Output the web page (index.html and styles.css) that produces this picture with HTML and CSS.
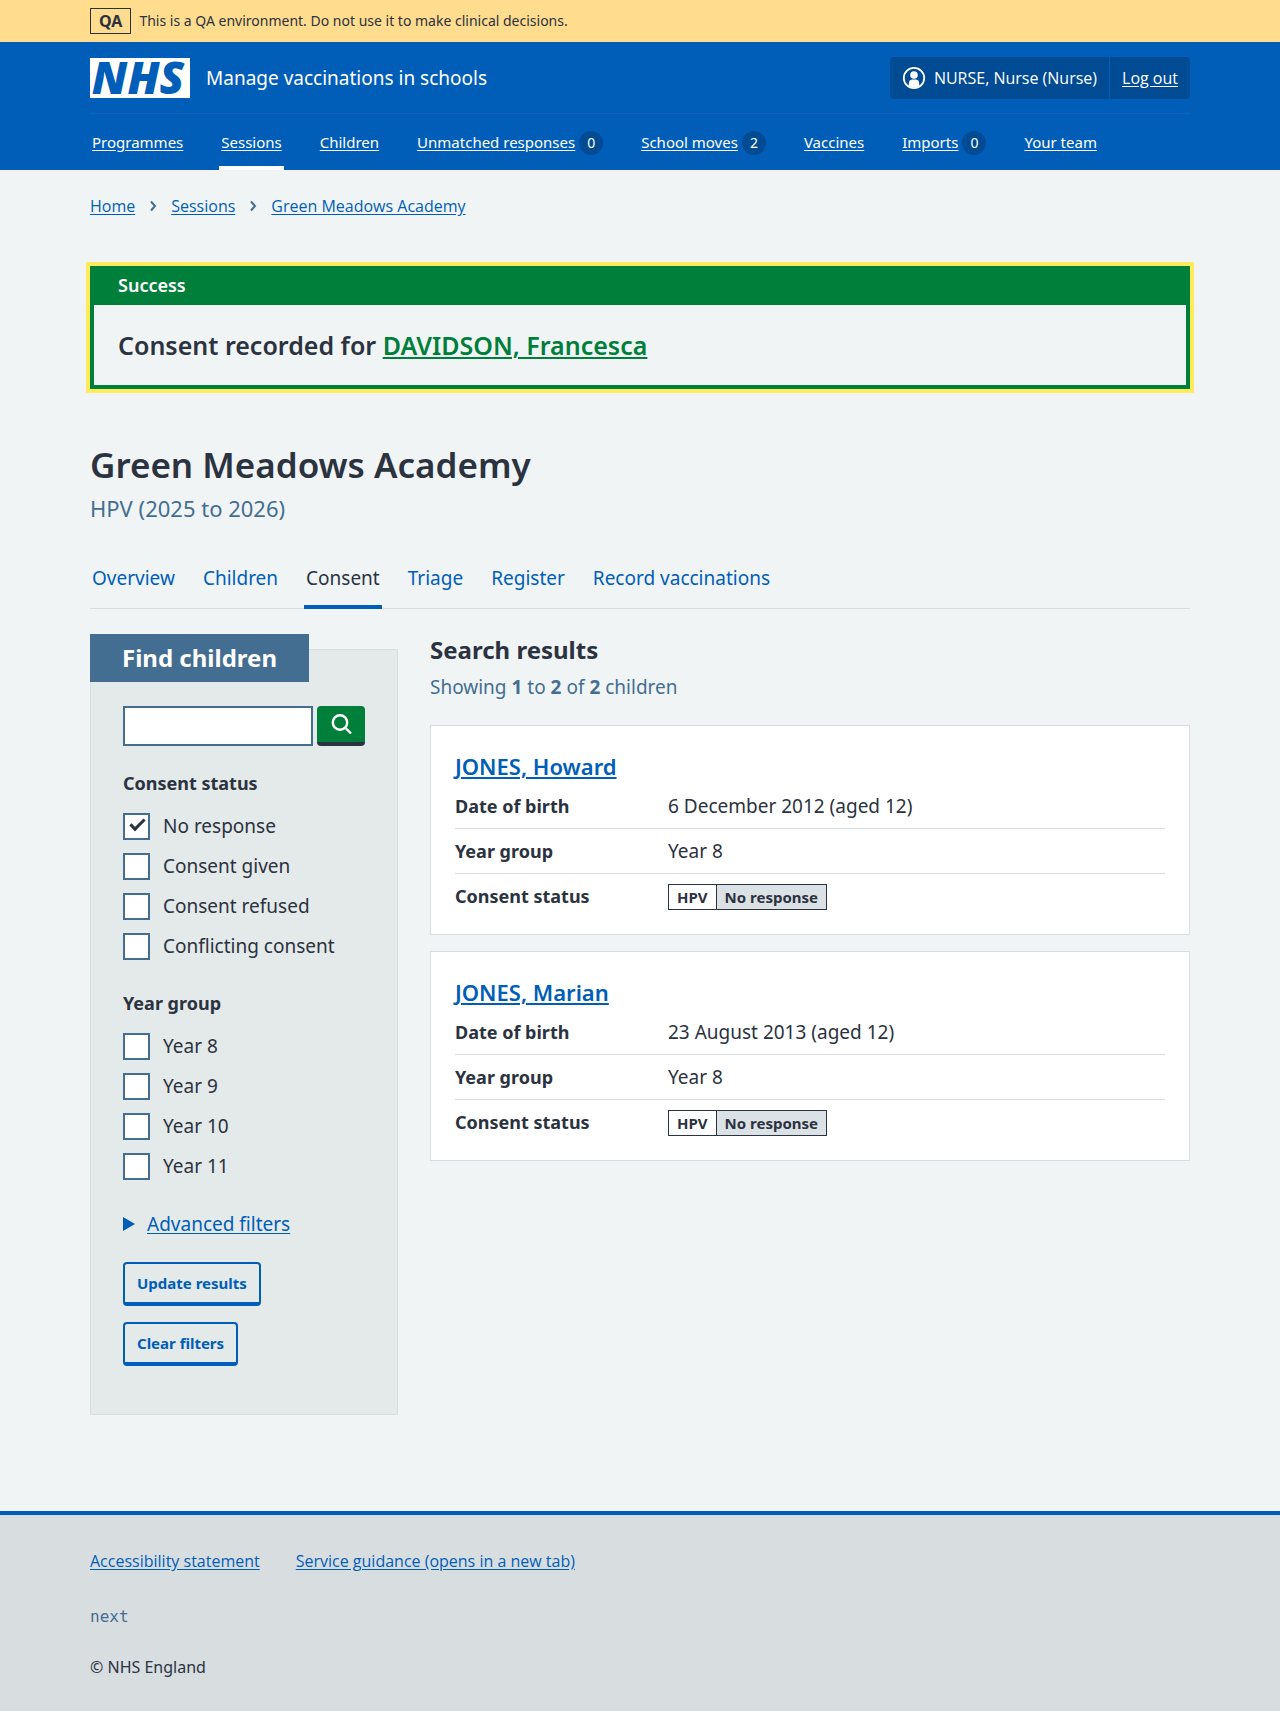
FILE: index.html
```html
<!DOCTYPE html>
<html lang="en">
<head>
<meta charset="utf-8">
<meta name="viewport" content="width=device-width, initial-scale=1">
<title>Green Meadows Academy – Manage vaccinations in schools</title>
<link rel="stylesheet" href="styles.css">
</head>
<body>
<div class="environment">
  <div class="container environment-inner">
    <strong class="environment-tag">QA</strong>
    <span>This is a QA environment. Do not use it to make clinical decisions.</span>
  </div>
</div>

<header class="header">
  <div class="container">
    <div class="header-top">
      <a class="service" href="#">
        <svg class="logo" viewBox="0 0 100 40" role="img" aria-label="NHS">
          <rect width="100" height="40" fill="#fff"/>
          <text class="logo-text" x="48" y="36" text-anchor="middle">NHS</text>
        </svg>
        <span>Manage vaccinations in schools</span>
      </a>
      <div class="account">
        <span class="account-user">
          <svg class="account-icon" viewBox="0 0 24 24" aria-hidden="true">
            <circle cx="12" cy="12" r="10.2" fill="none" stroke="#fff" stroke-width="1.8"/>
            <circle cx="12" cy="9" r="3.8" fill="#fff"/>
            <path fill="#fff" d="M6.8 20v-2.600a4 4 0 0 1 4-4h2.400a4 4 0 0 1 4 4V20A9.800 9.800 0 0 1 6.800 20z"/>
          </svg>
          NURSE, Nurse (Nurse)
        </span>
        <a class="account-link" href="#">Log out</a>
      </div>
    </div>
    <nav class="main-nav" aria-label="Menu">
      <a href="#">Programmes</a>
      <a class="current" href="#" aria-current="page">Sessions</a>
      <a href="#">Children</a>
      <a href="#">Unmatched responses<span class="count">0</span></a>
      <a href="#">School moves<span class="count">2</span></a>
      <a href="#">Vaccines</a>
      <a href="#">Imports<span class="count">0</span></a>
      <a href="#">Your team</a>
    </nav>
  </div>
</header>

<div class="container">
  <nav class="breadcrumb" aria-label="Breadcrumb">
    <a href="#">Home</a>
    <svg class="chevron" viewBox="0 0 8 12" aria-hidden="true"><path d="M2 1.500L6 6l-4 4.500"/></svg>
    <a href="#">Sessions</a>
    <svg class="chevron" viewBox="0 0 8 12" aria-hidden="true"><path d="M2 1.500L6 6l-4 4.500"/></svg>
    <a href="#">Green Meadows Academy</a>
  </nav>

  <main>
    <section class="notification" role="alert" aria-labelledby="notification-title">
      <h2 class="notification-title" id="notification-title">Success</h2>
      <p class="notification-text">Consent recorded for <a href="#">DAVIDSON, Francesca</a></p>
    </section>

    <h1 class="title">Green Meadows Academy</h1>
    <p class="caption">HPV (2025 to 2026)</p>

    <nav class="tabs" aria-label="Session">
      <a href="#">Overview</a>
      <a href="#">Children</a>
      <a class="current" href="#" aria-current="page">Consent</a>
      <a href="#">Triage</a>
      <a href="#">Register</a>
      <a href="#">Record vaccinations</a>
    </nav>

    <div class="columns">
      <form class="filters">
        <h2 class="filters-title">Find children</h2>
        <div class="filters-body">
          <div class="search">
            <input class="search-input" type="search" aria-label="Search">
            <button class="search-button" type="submit" aria-label="Search">
              <svg viewBox="0 0 24 24" aria-hidden="true"><circle cx="11" cy="10.500" r="7.200"/><path d="M16 15.500l6 6"/></svg>
            </button>
          </div>

          <fieldset class="group">
            <legend>Consent status</legend>
            <label class="option"><input type="checkbox" checked>No response</label>
            <label class="option"><input type="checkbox">Consent given</label>
            <label class="option"><input type="checkbox">Consent refused</label>
            <label class="option"><input type="checkbox">Conflicting consent</label>
          </fieldset>

          <fieldset class="group">
            <legend>Year group</legend>
            <label class="option"><input type="checkbox">Year 8</label>
            <label class="option"><input type="checkbox">Year 9</label>
            <label class="option"><input type="checkbox">Year 10</label>
            <label class="option"><input type="checkbox">Year 11</label>
          </fieldset>

          <details class="advanced">
            <summary><svg class="marker" viewBox="0 0 12 14" aria-hidden="true"><path d="M0 0l12 7-12 7z"/></svg><span>Advanced filters</span></summary>
          </details>

          <div class="actions">
            <button class="button" type="submit">Update results</button>
            <button class="button" type="reset">Clear filters</button>
          </div>
        </div>
      </form>

      <section class="results">
        <h2 class="results-title">Search results</h2>
        <p class="results-count">Showing <b>1</b> to <b>2</b> of <b>2</b> children</p>

        <article class="card">
          <h3 class="card-title"><a href="#">JONES, Howard</a></h3>
          <dl class="summary">
            <div><dt>Date of birth</dt><dd>6 December 2012 (aged 12)</dd></div>
            <div><dt>Year group</dt><dd>Year 8</dd></div>
            <div><dt>Consent status</dt><dd><span class="tag"><span>HPV</span><span class="tag-status">No response</span></span></dd></div>
          </dl>
        </article>

        <article class="card">
          <h3 class="card-title"><a href="#">JONES, Marian</a></h3>
          <dl class="summary">
            <div><dt>Date of birth</dt><dd>23 August 2013 (aged 12)</dd></div>
            <div><dt>Year group</dt><dd>Year 8</dd></div>
            <div><dt>Consent status</dt><dd><span class="tag"><span>HPV</span><span class="tag-status">No response</span></span></dd></div>
          </dl>
        </article>
      </section>
    </div>
  </main>
</div>

<footer class="footer">
  <div class="container">
    <nav class="footer-links" aria-label="Footer">
      <a href="#">Accessibility statement</a>
      <a href="#">Service guidance (opens in a new tab)</a>
    </nav>
    <p class="version">next</p>
    <p class="copyright">© NHS England</p>
  </div>
</footer>
</body>
</html>
```
FILE: styles.css
```css
:root {
  --blue: #005eb8;
  --dark-blue: #004b93;
  --text: #2b3240;
  --slate: #446e91;
  --green: #007f3b;
  --border: #d8dde0;
  --body: "Noto Sans", "Open Sans", sans-serif;
  --compact: "Open Sans", "Noto Sans", sans-serif;
}

* { box-sizing: border-box; }

body {
  margin: 0;
  min-height: 100vh;
  display: flex;
  flex-direction: column;
  background: #f0f4f5;
  color: var(--text);
  font: 19px/28px var(--body);
}

h1, h2, h3, p, dl, dd, fieldset { margin: 0; }
a { color: var(--blue); text-underline-offset: 2px; }

.container {
  width: 100%;
  max-width: 1164px;
  margin: 0 auto;
  padding: 0 32px;
}

/* Environment banner */
.environment { background: #ffdc8e; font-size: 14px; line-height: 24px; }
.environment-inner { display: flex; align-items: center; gap: 8px; min-height: 42px; }
.environment-tag { padding: 0 8px; border: 1px solid; font-size: 16px; }

/* Header */
.header { background: var(--blue); color: #fff; }
.header a { color: #fff; }
.header-top {
  display: flex;
  align-items: center;
  justify-content: space-between;
  height: 72px;
  border-bottom: 1px solid #1560b8;
}
.service { display: flex; align-items: center; gap: 16px; text-decoration: none; }
.logo { width: 100px; height: 40px; overflow: visible; }
.logo-text { fill: var(--blue); font: italic 800 45px var(--compact); }
.account { display: flex; border-radius: 4px; background: var(--dark-blue); font-family: var(--compact); font-size: 16px; }
.account-user, .account-link { display: flex; align-items: center; gap: 8px; height: 42px; padding: 0 12px; }
.account-icon { width: 24px; height: 24px; }
.account-link { border-left: 1px solid var(--blue); }
.main-nav { display: flex; gap: 34px; font-size: 15px; }
.main-nav a {
  height: 56px;
  padding: 16px 2px 0;
  border-bottom: 4px solid transparent;
  line-height: 24px;
}
.main-nav .current { border-color: #fff; }
.count {
  display: inline-block;
  min-width: 24px;
  margin-left: 4px;
  border-radius: 12px;
  background: var(--dark-blue);
  font-size: 14px;
  line-height: 24px;
  text-align: center;
}

/* Breadcrumb */
.breadcrumb { display: flex; align-items: center; gap: 14px; padding: 24px 0 0; font-family: var(--compact); font-size: 16px; line-height: 24px; }
.chevron { width: 8px; height: 12px; fill: none; stroke: var(--slate); stroke-width: 2; }

/* Notification banner */
.notification { margin: 48px 0 55px; border: 4px solid var(--green); outline: 4px solid #ffeb5c; }
.notification-title { padding: 3px 24px 7px; background: var(--green); color: #fff; font-size: 18px; font-weight: 600; line-height: 25px; }
.notification-text { padding: 24px; font-size: 25px; font-weight: 600; line-height: 32px; }
.notification-text a { color: var(--green); }

/* Page title and tabs */
.title { font-size: 35px; line-height: 42px; font-weight: 600; }
.caption { margin: 4px 0 25px; color: var(--slate); font-size: 22px; line-height: 36px; }
.tabs { display: flex; gap: 24px; box-shadow: inset 0 -1px var(--border); }
.tabs a {
  height: 58px;
  padding: 13px 2px 0;
  border-bottom: 4px solid transparent;
  text-decoration: none;
}
.tabs .current { border-color: var(--blue); color: inherit; }

.columns { display: grid; grid-template-columns: 308px 1fr; gap: 32px; margin: 25px 0 96px; align-items: start; }

/* Filters */
.filters { display: flex; flex-direction: column; align-items: flex-start; }
.filters-title {
  z-index: 1;
  margin-bottom: -33px;
  padding: 8px 32px;
  background: var(--slate);
  color: #fff;
  font-size: 24px;
  font-weight: 700;
  line-height: 32px;
}
.filters-body { width: 100%; padding: 56px 32px 48px; border: 1px solid var(--border); background: #e4e9e9; }
.search { display: flex; gap: 4px; margin-bottom: 24px; }
.search-input { flex: 1; min-width: 0; height: 40px; border: 2px solid var(--slate); background: #fff; }
.search-button { width: 48px; height: 40px; padding: 0; border: 0; border-bottom: 4px solid var(--text); border-radius: 4px; background: var(--green); }
.search-button svg { display: block; width: 24px; height: 24px; margin: auto; fill: none; stroke: #fff; stroke-width: 2.4; }
.group { margin-bottom: 24px; padding: 0; border: 0; }
.group legend { padding: 0; margin-bottom: 10px; font-size: 18px; font-weight: 700; line-height: 26px; }
.option { display: flex; align-items: center; gap: 13px; height: 40px; }
.option input { appearance: none; width: 27px; height: 27px; margin: 0; border: 2px solid var(--slate); background: #fff; }
.option input:checked::before {
  content: "";
  display: block;
  box-sizing: border-box;
  width: 15px;
  height: 8px;
  margin: 4px 5px;
  border: solid var(--text);
  border-width: 0 0 3px 3px;
  rotate: -45deg;
}
.advanced { margin-bottom: 24px; }
.advanced summary { display: flex; align-items: center; gap: 12px; color: var(--blue); text-decoration: underline; text-underline-offset: 2px; }
.marker { width: 12px; height: 14px; fill: var(--blue); }
.actions { display: flex; flex-direction: column; align-items: flex-start; gap: 16px; }
.button {
  height: 44px;
  padding: 0 12px;
  border: 2px solid var(--blue);
  border-bottom-width: 4px;
  border-radius: 4px;
  background: transparent;
  color: var(--blue);
  font: 700 15px/24px var(--body);
}

/* Results */
.results-title { font-size: 24px; line-height: 31px; font-weight: 700; }
.results-count { margin: 8px 0 24px; color: var(--slate); }
.card { margin-bottom: 16px; padding: 24px 24px 16px; border: 1px solid var(--border); background: #fff; }
.card-title { margin-bottom: 2px; font-size: 22px; font-weight: 600; line-height: 32px; }
.card-title a, .notification-text a { text-decoration-thickness: 2px; }
.summary div { display: grid; grid-template-columns: 30% 1fr; align-items: center; height: 45px; border-bottom: 1px solid var(--border); }
.summary div:last-child { height: 44px; border: 0; }
.summary dt { font-size: 18px; font-weight: 700; }
.tag { display: inline-flex; border: 1px solid; font-size: 15px; font-weight: 700; line-height: 24px; vertical-align: middle; }
.tag span { padding: 0 8px; }
.tag .tag-status { border-left: 1px solid; background: #dce1e5; }

/* Footer */
.footer { flex: 1; padding: 32px 0; border-top: 4px solid var(--blue); background: #d8dde0; font-size: 16px; }
.footer-links { display: flex; gap: 36px; font-family: var(--compact); }
.version { margin: 28px 0 22px; color: var(--slate); font-family: "DejaVu Sans Mono", monospace; }
```
